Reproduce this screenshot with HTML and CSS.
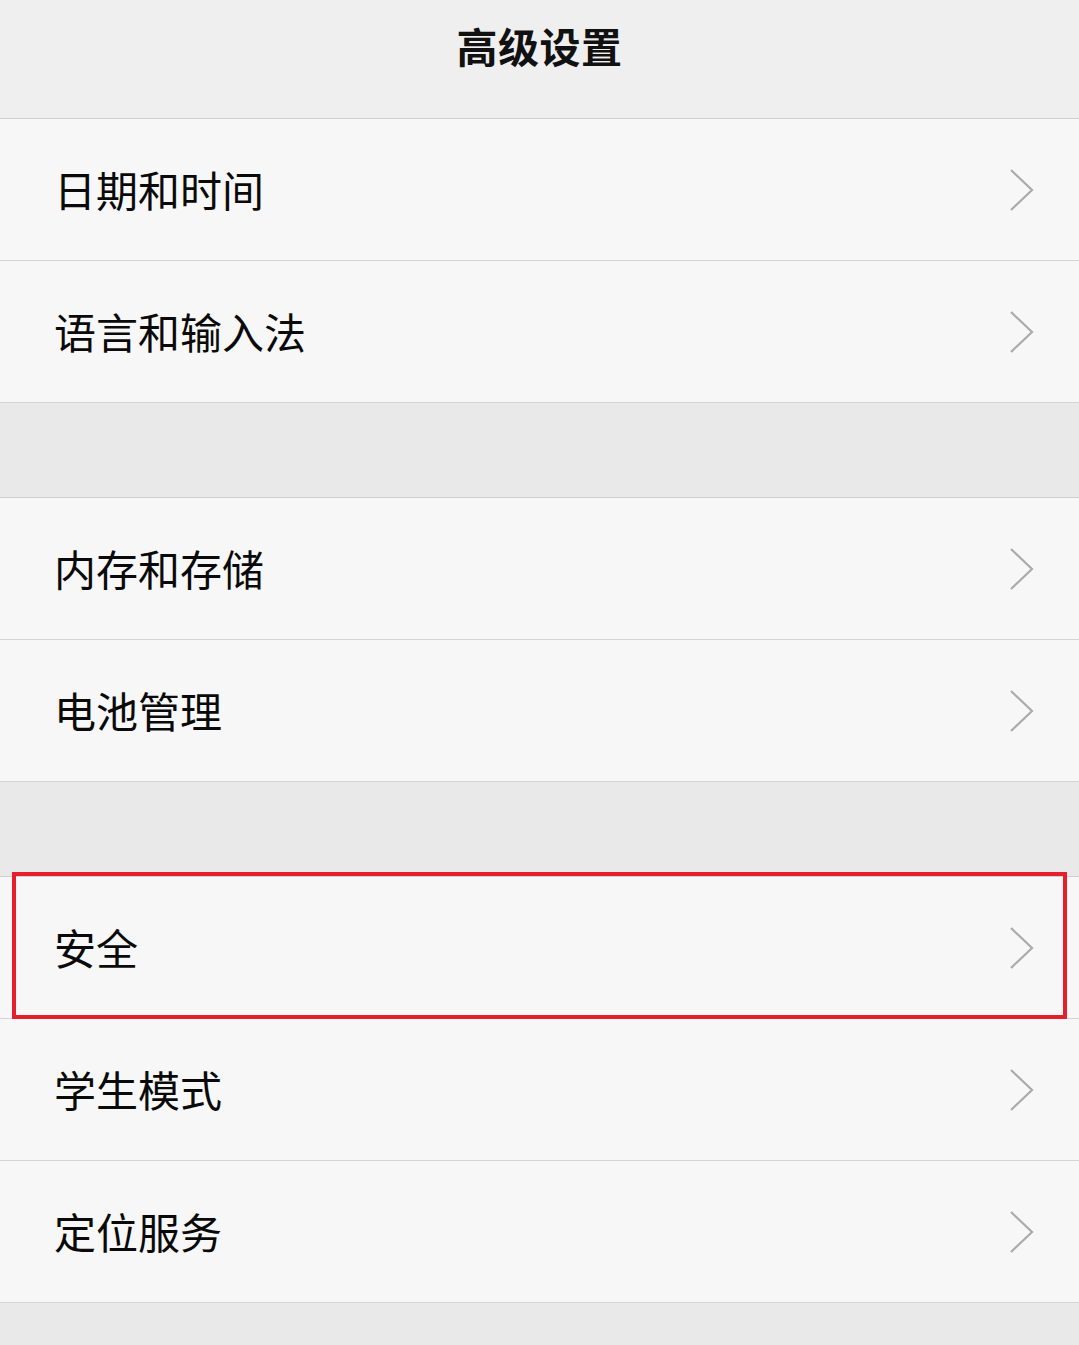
FILE: index.html
```html
<!DOCTYPE html>
<html lang="zh-CN">
<head>
<meta charset="utf-8">
<title>高级设置</title>
<link rel="stylesheet" href="styles.css">
</head>
<body>
<div class="page">
  <header class="topbar"><h1 class="title">高级设置</h1></header>

  <section class="group">
    <div class="row"><span class="label">日期和时间</span><svg class="chev" viewBox="0 0 26 44"><polyline points="2,2 23,22 2,42"/></svg></div>
    <div class="row"><span class="label">语言和输入法</span><svg class="chev" viewBox="0 0 26 44"><polyline points="2,2 23,22 2,42"/></svg></div>
  </section>
  <div class="gap"></div>
  <section class="group">
    <div class="row"><span class="label">内存和存储</span><svg class="chev" viewBox="0 0 26 44"><polyline points="2,2 23,22 2,42"/></svg></div>
    <div class="row"><span class="label">电池管理</span><svg class="chev" viewBox="0 0 26 44"><polyline points="2,2 23,22 2,42"/></svg></div>
  </section>
  <div class="gap"></div>
  <section class="group">
    <div class="row highlighted"><span class="label">安全</span><svg class="chev" viewBox="0 0 26 44"><polyline points="2,2 23,22 2,42"/></svg><div class="redbox"></div></div>
    <div class="row"><span class="label">学生模式</span><svg class="chev" viewBox="0 0 26 44"><polyline points="2,2 23,22 2,42"/></svg></div>
    <div class="row"><span class="label">定位服务</span><svg class="chev" viewBox="0 0 26 44"><polyline points="2,2 23,22 2,42"/></svg></div>
  </section>
</div>
</body>
</html>
```
FILE: styles.css
```css
* { box-sizing: border-box; }
html, body {
  margin: 0;
  padding: 0;
  background: #e9e9e9;
}
body {
  font-family: "Noto Sans CJK SC", "Noto Sans", sans-serif;
  color: #111;
}
.page {
  width: 1079px;
  min-height: 1345px;
  background: #e9e9e9;
}
.topbar {
  height: 119px;
  background: #efefef;
  display: flex;
  align-items: center;
  justify-content: center;
  border-bottom: 1px solid #cfcfcf;
}
.title {
  margin: 0;
  font-size: 41px;
  font-weight: 700;
  letter-spacing: 0.5px;
  line-height: 1;
  margin-top: -28px;
  color: #111;
}
.group {
  background: #f7f7f7;
}
.gap + .group {
  border-top: 1px solid #d0d0d0;
}
.row {
  position: relative;
  height: 142px;
  border-bottom: 1px solid #d4d4d4;
  display: flex;
  align-items: center;
  justify-content: space-between;
  padding: 0 44px 0 54px;
  background: #f7f7f7;
}
.label {
  font-size: 42px;
  font-weight: 400;
  line-height: 1;
  color: #0a0a0a;
  margin-top: -2px;
}
.chev {
  width: 26px;
  height: 44px;
  fill: none;
  stroke: #ababab;
  stroke-width: 2.2;
}
.gap {
  height: 94px;
  background: #e9e9e9;
}
.redbox {
  position: absolute;
  left: 12px;
  right: 12px;
  top: -5px;
  bottom: -1px;
  border: 4px solid #e51f2b;
  pointer-events: none;
}
```
